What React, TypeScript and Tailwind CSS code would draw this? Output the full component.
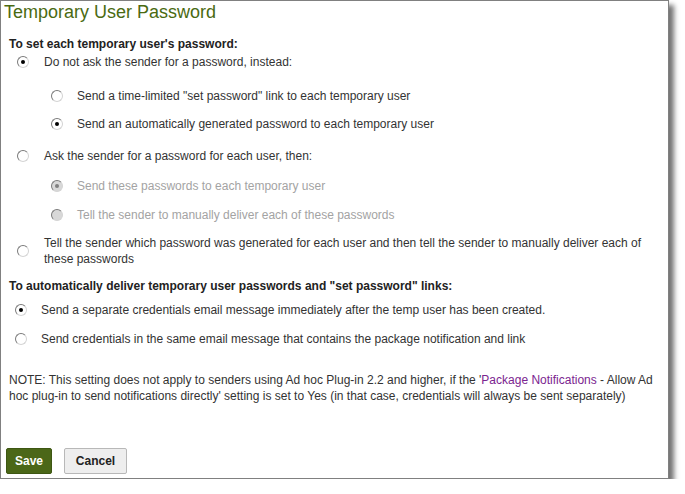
import React from "react";

type RadioProps = { checked?: boolean; disabled?: boolean };

function Radio({ checked, disabled }: RadioProps) {
  return (
    <span
      className={
        "relative inline-flex h-[12px] w-[12px] shrink-0 items-center justify-center rounded-full border border-t-[#7a7a7a] border-l-[#7a7a7a] border-r-[#d4d4d4] border-b-[#d4d4d4] " +
        (disabled ? "bg-[#d8d8d8]" : "bg-white")
      }
    >
      {checked && (
        <span
          className={
            "h-[4px] w-[4px] rounded-full " + (disabled ? "bg-[#808080]" : "bg-black")
          }
        />
      )}
    </span>
  );
}

export default function App() {
  return (
    <div
      className="relative w-[669px] h-[479px] border border-[#808080] bg-white shadow-[5px_5px_5px_rgba(0,0,0,0.55)] flex flex-col text-[12px] text-[#333]"
      style={{ fontFamily: '"Liberation Sans", Arial, sans-serif' }}
    >
      <h1 className="pl-[3px] text-[18px] leading-[22px] text-[#4a6a12]">
        Temporary User Password
      </h1>

      <div className="mt-[13px] pl-[8px] font-bold leading-[16px] text-[#222]">
        To set each temporary user's password:
      </div>

      <div className="mt-[2px] flex items-center pl-[16px] leading-[16px]">
        <Radio checked />
        <span className="ml-[15px]">Do not ask the sender for a password, instead:</span>
      </div>

      <div className="mt-[18px] flex items-center pl-[50px] leading-[16px]">
        <Radio />
        <span className="ml-[14px]">Send a time-limited "set password" link to each temporary user</span>
      </div>

      <div className="mt-[12px] flex items-center pl-[50px] leading-[16px]">
        <Radio checked />
        <span className="ml-[14px]">Send an automatically generated password to each temporary user</span>
      </div>

      <div className="mt-[16px] flex items-center pl-[16px] leading-[16px]">
        <Radio />
        <span className="ml-[15px]">Ask the sender for a password for each user, then:</span>
      </div>

      <div className="mt-[14px] flex items-center pl-[50px] leading-[16px] text-[#a3a3a3]">
        <Radio checked disabled />
        <span className="ml-[14px]">Send these passwords to each temporary user</span>
      </div>

      <div className="mt-[13px] flex items-center pl-[50px] leading-[16px] text-[#a3a3a3]">
        <Radio disabled />
        <span className="ml-[14px]">Tell the sender to manually deliver each of these passwords</span>
      </div>

      <div className="mt-[12px] flex items-center pl-[16px] pr-[2px] leading-[16px]">
        <Radio />
        <span className="ml-[15px]">
          Tell the sender which password was generated for each user and then tell the sender to manually deliver each of these passwords
        </span>
      </div>

      <div className="mt-[11px] pl-[8px] font-bold leading-[16px] text-[#222]">
        To automatically deliver temporary user passwords and "set password" links:
      </div>

      <div className="mt-[8px] flex items-center pl-[14px] leading-[16px]">
        <Radio checked />
        <span className="ml-[14px]">Send a separate credentials email message immediately after the temp user has been created.</span>
      </div>

      <div className="mt-[13px] flex items-center pl-[14px] leading-[16px]">
        <Radio />
        <span className="ml-[14px]">Send credentials in the same email message that contains the package notification and link</span>
      </div>

      <p className="mt-[25px] pl-[8px] pr-[2px] leading-[16px]">
        NOTE: This setting does not apply to senders using Ad hoc Plug-in 2.2 and higher, if the '<span className="text-[#7b2490]">Package Notifications</span> - Allow Ad hoc plug-in to send notifications directly' setting is set to Yes (in that case, credentials will always be sent separately)
      </p>

      <div className="mt-[44px] flex items-center gap-[12px] pl-[5px]">
        <button className="h-[26px] w-[46px] rounded-[2px] bg-[#4b6718] border border-[#3e5713] text-white font-bold text-[12px]">
          Save
        </button>
        <button className="h-[26px] w-[63px] rounded-[2px] bg-[#eeeeee] border border-[#b8b8b8] text-[#222] font-bold text-[12px]">
          Cancel
        </button>
      </div>
    </div>
  );
}
